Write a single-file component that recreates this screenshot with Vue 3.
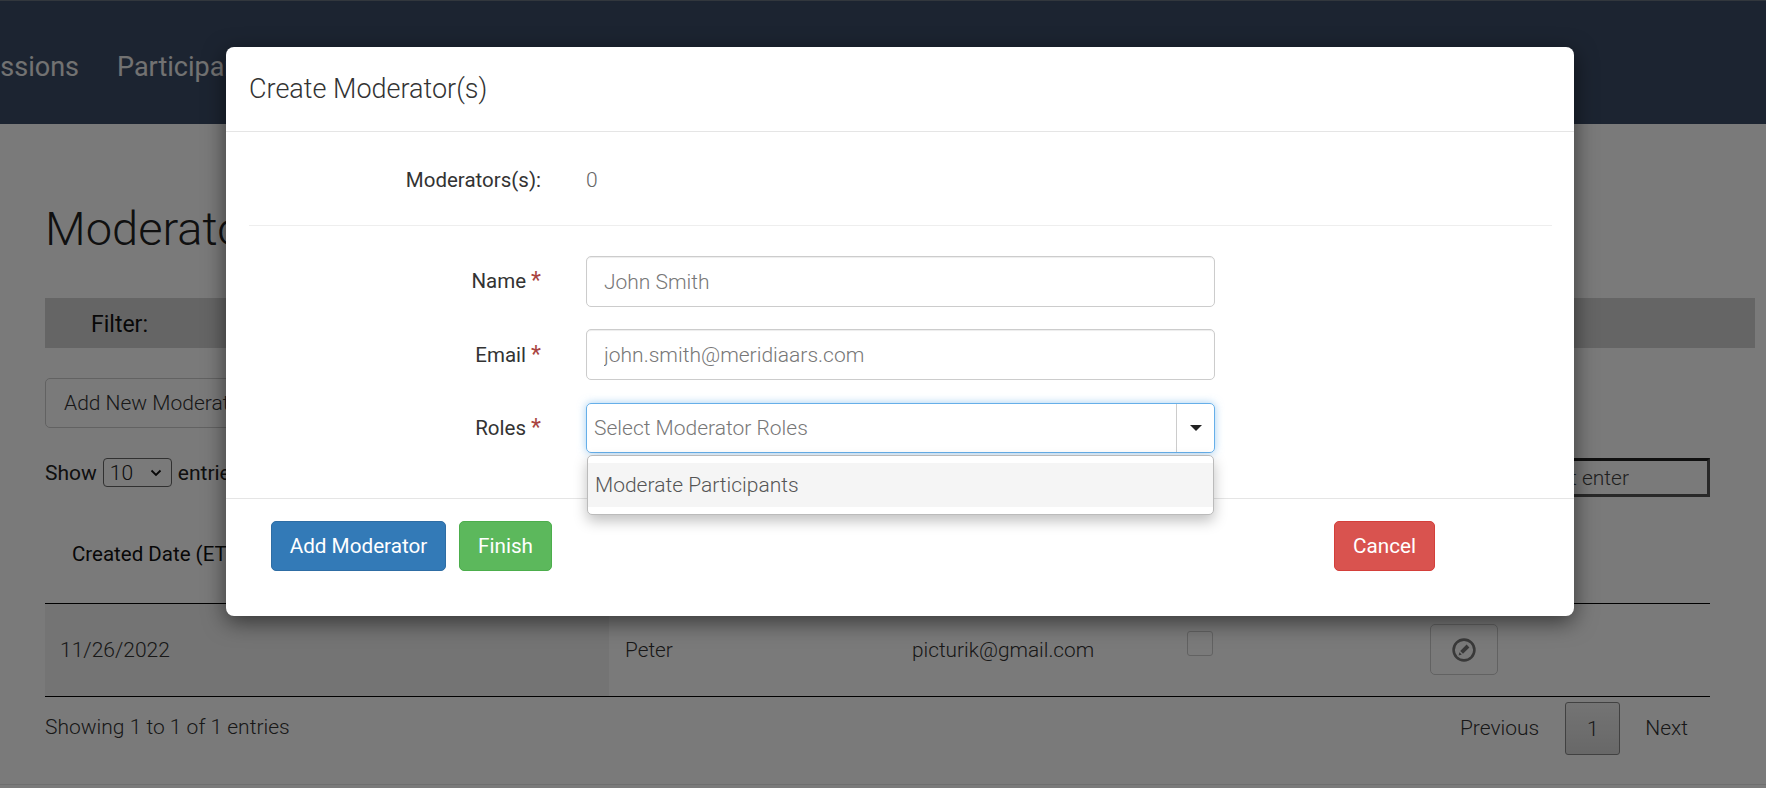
<script setup>
const rows = [{ date: '11/26/2022', name: 'Peter', email: 'picturik@gmail.com' }]
</script>

<template>
  <div class="page">
    <nav class="nav">
      <a class="nav-link first">Sessions</a>
      <a class="nav-link">Participants</a>
    </nav>
    <main class="main">
      <h1 class="title">Moderators</h1>
      <div class="filter"><span>Filter:</span></div>
      <button class="add-btn">Add New Moderator</button>
      <div class="tools">
        <div class="show">
          <span>Show</span>
          <span class="fake-select">10
            <svg width="12" height="8" viewBox="0 0 12 8"><path d="M1.5 1.5 6 6l4.5-4.5" fill="none" stroke="#111" stroke-width="1.8"/></svg>
          </span>
          <span>entries</span>
        </div>
        <input class="search" placeholder="Type search and hit enter" />
      </div>
      <div class="table">
        <div class="thead"><div class="th">Created Date (ET)</div></div>
        <div v-for="r in rows" :key="r.email" class="tr">
          <div class="td shade">{{ r.date }}</div>
          <div class="td">{{ r.name }}</div>
          <div class="td">{{ r.email }}</div>
          <div class="td check-cell"><span class="check"></span></div>
          <div class="td edit-cell">
            <span class="edit-btn">
              <svg width="24" height="24" viewBox="0 0 24 24">
                <circle cx="12" cy="12" r="10.4" fill="none" stroke="#777" stroke-width="2.6"/>
                <path d="M14.6 6.6 17.4 9.4 11 15.8 8.2 13Z M7.4 14.2 9.8 16.6 6.6 17.4Z" fill="#777"/>
              </svg>
            </span>
          </div>
        </div>
      </div>
      <div class="foot">
        <span class="showing">Showing 1 to 1 of 1 entries</span>
        <div class="pager">
          <span class="pg">Previous</span>
          <span class="pg-cur">1</span>
          <span class="pg">Next</span>
        </div>
      </div>
      <div class="end-line"></div>
    </main>

    <div class="backdrop"></div>

    <section class="modal">
      <header class="m-head">Create Moderator(s)</header>
      <div class="m-body">
        <div class="count-row">
          <label class="lbl">Moderators(s):</label>
          <span class="count">0</span>
        </div>
        <div class="hr"></div>
        <div class="row name-row">
          <label class="lbl">Name <i>*</i></label>
          <input class="ctl" placeholder="John Smith" />
        </div>
        <div class="row email-row">
          <label class="lbl">Email <i>*</i></label>
          <input class="ctl" placeholder="john.smith@meridiaars.com" />
        </div>
        <div class="row roles-row">
          <label class="lbl">Roles <i>*</i></label>
          <div class="combo">
            <input class="combo-in" placeholder="Select Moderator Roles" />
            <span class="caret-box"><span class="caret"></span></span>
            <div class="menu"><div class="item">Moderate Participants</div></div>
          </div>
        </div>
      </div>
      <footer class="m-foot">
        <div class="left-btns">
          <button class="btn blue">Add Moderator</button>
          <button class="btn green">Finish</button>
        </div>
        <button class="btn red">Cancel</button>
      </footer>
    </section>
  </div>
</template>

<style>
html, body { margin: 0; background: #fff; }
</style>

<style scoped>
* { box-sizing: border-box; }
.page {
  position: relative;
  width: 1766px;
  height: 788px;
  overflow: hidden;
  font-family: Roboto, "Liberation Sans", sans-serif;
  font-size: 21px;
  color: #333;
  background: #fff;
}
.nav {
  height: 124px;
  background: #3c4b66;
  border-top: 1px solid #6a7480;
  display: flex;
  align-items: center;
  gap: 38px;
  color: #fff;
  font-size: 27px;
  padding-top: 8px;
}
.nav-link { color: #eee; white-space: nowrap; font-weight: 400; }
.nav-link.first { margin-left: -30px; }
.main { padding-left: 45px; padding-right: 56px; }
.title {
  margin: 72px 0 0;
  height: 66px;
  font-size: 47px;
  line-height: 66px;
  font-weight: 300;
  color: #222;
}
.filter {
  margin-top: 36px;
  width: 1710px;
  height: 50px;
  background: #d4d4d4;
  display: flex;
  align-items: center;
  padding: 2px 0 0 46px;
  font-size: 23px;
  color: #111;
}
.add-btn {
  display: block;
  margin-top: 30px;
  height: 50px;
  width: 240px;
  padding: 0 0 0 18px;
  text-align: left;
  background: #fff;
  border: 1px solid #ccc;
  border-radius: 5px;
  font: 300 21px Roboto, sans-serif;
  color: #333;
}
.tools {
  margin-top: 30px;
  height: 39px;
  display: flex;
  justify-content: space-between;
  align-items: flex-start;
}
.show { display: flex; align-items: center; gap: 6px; height: 29px; font-size: 21px; color: #222; }
.fake-select {
  width: 69px;
  height: 29px;
  border: 1px solid #666;
  border-radius: 4px;
  display: flex;
  align-items: center;
  justify-content: space-between;
  padding: 0 9px 0 6px;
  font-weight: 300;
}
.search {
  width: 320px;
  height: 39px;
  border: 3px solid #555;
  border-top-color: #222;
  outline: none;
  padding: 0 78px 0 0;
  text-align: right;
  font: 300 21px Roboto, sans-serif;
  background: #fff;
}
.search::placeholder { color: #444; opacity: 1; }
.table { margin-top: 0; }
.thead { height: 107px; border-bottom: 1px solid #000; }
.th { padding: 45px 0 0 27px; font-size: 20.5px; line-height: 24px; color: #111; }
.tr {
  display: grid;
  grid-template-columns: 564px 287px 275px 243px 296px;
  height: 93px;
  border-bottom: 1px solid #000;
}
.td { padding: 0 15px; display: flex; align-items: center; font-weight: 300; font-size: 21px; color: #333; }
.td:nth-child(2), .td:nth-child(3) { padding-left: 16px; font-size: 20.8px; }
.shade { background: #f2f2f2; }
.td.check-cell { align-items: flex-start; padding: 27px 16px 0; }
.check { width: 26px; height: 25px; border: 1px solid #ccc; border-radius: 3px; background: #fff; }
.td.edit-cell { padding-left: 16px; align-items: flex-start; padding-top: 20px; }
.edit-btn {
  width: 68px;
  height: 51px;
  border: 1px solid #ccc;
  border-radius: 5px;
  display: flex;
  align-items: center;
  justify-content: center;
}
.foot { display: flex; justify-content: space-between; align-items: flex-start; height: 87px; }
.showing { margin-top: 16px; font-weight: 300; font-size: 21px; line-height: 28px; }
.pager { display: flex; align-items: flex-start; margin-top: 5px; margin-right: 0; }
.pg { font-weight: 300; font-size: 21px; line-height: 53px; color: #333; padding: 0 22px 0 0; }
.pg:last-child { padding: 0 22px 0 25px; }
.pg-cur {
  width: 55px;
  height: 53px;
  margin-left: 4px;
  border: 1px solid #888;
  border-radius: 3px;
  background: linear-gradient(#f2f2f2, #d9d9d9);
  display: flex;
  align-items: center;
  justify-content: center;
  font-weight: 300;
}
.end-line { height: 1px; margin: 0 -56px 0 -45px; background: #e6e6e6; }

.backdrop { position: absolute; inset: 0; background: rgba(0, 0, 0, .52); }

.modal {
  position: absolute;
  left: 226px;
  top: 47px;
  width: 1348px;
  height: 569px;
  background: #fff;
  border-radius: 8px;
  box-shadow: 0 6px 22px rgba(0, 0, 0, .55);
}
.m-head {
  height: 85px;
  padding: 0 23px;
  display: flex;
  align-items: center;
  border-bottom: 1px solid #e5e5e5;
  font-size: 27px;
  font-weight: 300;
  color: #333;
}
.m-body { height: 367px; padding: 0 22px 0 23px; border-bottom: 1px solid #e5e5e5; }
.count-row { height: 93px; display: flex; align-items: center; padding-top: 2px; }
.lbl {
  width: 292px;
  margin-right: 45px;
  text-align: right;
  flex: none;
  font-size: 20.5px;
  color: #333;
}
.lbl i { color: #a94442; font-style: normal; font-size: 23px; line-height: 1; }
.count { font-weight: 300; color: #666; }
.hr { height: 1px; background: #eee; }
.row { display: flex; align-items: center; }
.name-row { margin-top: 30px; height: 51px; }
.name-row .lbl { margin-bottom: 2px; }
.email-row { margin-top: 22px; height: 51px; }
.roles-row { margin-top: 23px; height: 50px; }
.ctl {
  width: 629px;
  height: 100%;
  border: 1px solid #ccc;
  border-radius: 5px;
  padding: 0 17px;
  outline: none;
  font: 300 21px Roboto, sans-serif;
  box-shadow: inset 0 1px 1px rgba(0, 0, 0, .075);
}
.ctl::placeholder, .combo-in::placeholder { color: #777; opacity: 1; }
.combo {
  position: relative;
  width: 629px;
  height: 100%;
  display: flex;
  border: 1px solid #66afe9;
  border-radius: 5px;
  box-shadow: 0 0 8px rgba(102, 175, 233, .6);
}
.combo-in {
  flex: 1;
  border: 0;
  outline: none;
  padding: 0 0 0 7px;
  background: transparent;
  font: 300 21px Roboto, sans-serif;
}
.caret-box {
  width: 38px;
  border-left: 1px solid #ccc;
  display: flex;
  align-items: center;
  justify-content: center;
}
.caret { width: 0; height: 0; border: 6px solid transparent; border-top: 6px solid #222; border-bottom: 0; }
.menu {
  position: absolute;
  left: 0;
  right: 0;
  top: 51px;
  height: 60px;
  padding: 7px 0 0;
  background: #fff;
  border: 1px solid #bbb;
  border-radius: 5px;
  box-shadow: 0 6px 14px rgba(0, 0, 0, .25);
  z-index: 2;
}
.item {
  height: 44px;
  padding-left: 7px;
  display: flex;
  align-items: center;
  background: #f5f5f5;
  font-weight: 300;
  color: #555;
}
.m-foot {
  padding: 22px 139px 0 45px;
  display: flex;
  justify-content: space-between;
}
.left-btns { display: flex; gap: 13px; }
.btn {
  height: 50px;
  padding: 0 19px;
  border: 1px solid;
  border-radius: 5px;
  color: #fff;
  font: 400 20.7px Roboto, sans-serif;
}
.blue { background: #337ab7; border-color: #2e6da4; width: 175px; padding: 0; }
.green { background: #5cb85c; border-color: #4cae4c; width: 93px; padding: 0; }
.red { background: #d9534f; border-color: #d43f3a; width: 101px; padding: 0; }
</style>
